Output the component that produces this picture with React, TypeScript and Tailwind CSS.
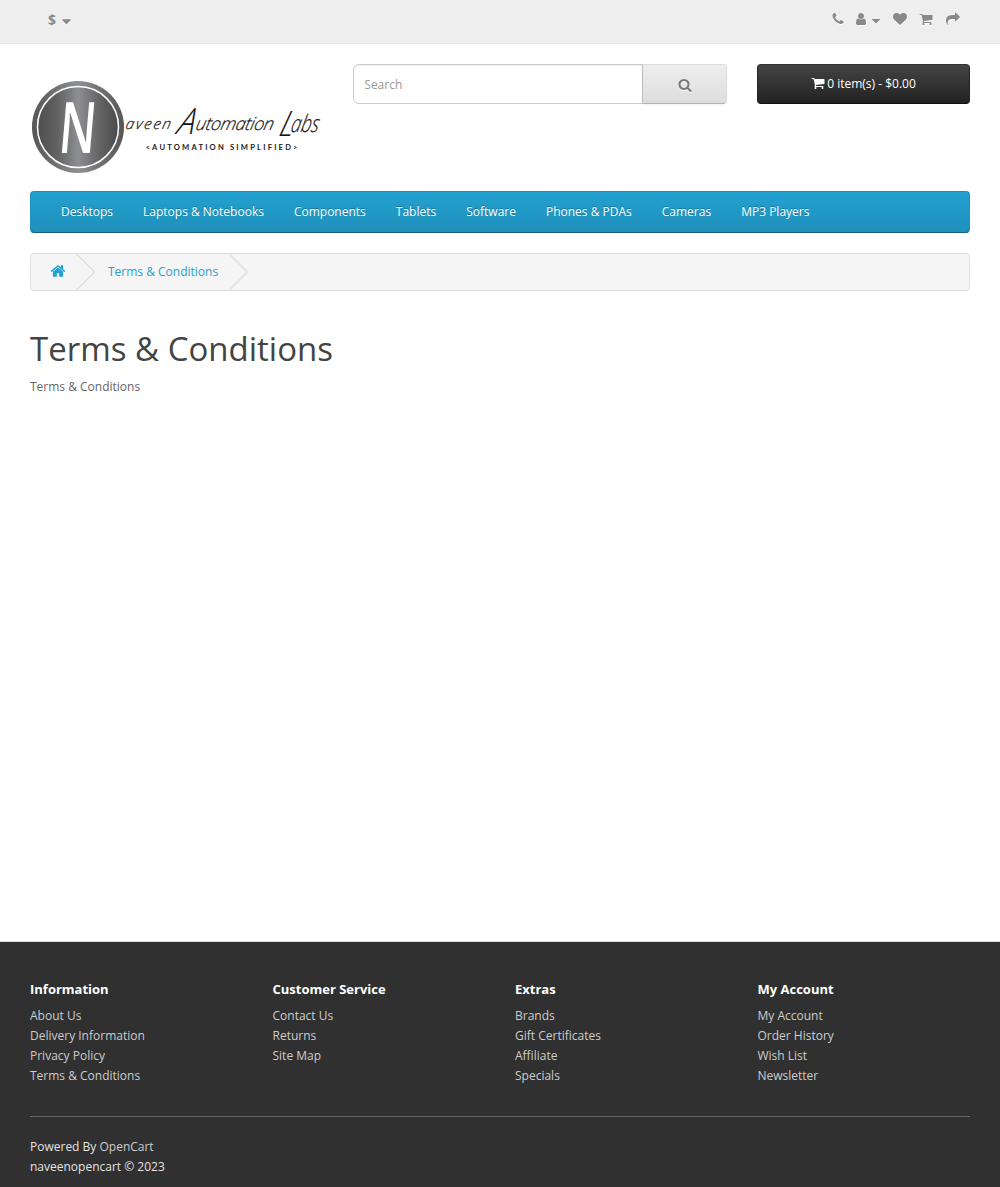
import React from "react";

const paths = {
  phone:
    "M1600 1240q0 27-10 70.5t-21 68.5q-21 50-122 106-94 51-186 51-27 0-52.5-3.5t-57.5-12.5-47.5-14.5-55.5-20.5-49-18q-98-35-175-83-128-79-264.5-215.5t-215.5-264.5q-48-77-83-175-3-9-18-49t-20.5-55.5-14.5-47.5-12.5-57.5-3.5-52.5q0-92 51-186 56-101 106-122 25-11 68.5-21t70.5-10q14 0 21 3 18 6 53 76 11 19 30 54t35 63.5 31 53.5q3 4 17.5 25t21.5 35.5 7 28.5q0 20-28.5 50t-62 55-62 53-28.5 46q0 9 5 22.5t8.5 20.5 14 24 11.5 19q76 137 174 235t235 174q2 1 19 11.5t24 14 20.5 8.5 22.5 5q18 0 46-28.5t53-62 55-62 50-28.5q14 0 28.5 7t35.5 21.5 25 17.5q25 15 53.5 31t63.5 35 54 30q70 35 76 53 3 7 3 21z",
  user: "M1536 1399q0 109-62.5 187t-150.5 78h-854q-88 0-150.5-78t-62.5-187q0-85 8.5-160.5t31.5-152 58.5-131 94-89 134.5-34.5q131 128 313 128t313-128q76 0 134.5 34.5t94 89 58.5 131 31.5 152 8.5 160.5zm-256-887q0 159-112.5 271.5t-271.5 112.5-271.5-112.5-112.5-271.5 112.5-271.5 271.5-112.5 271.5 112.5 112.5 271.5z",
  heart:
    "M896 1664q-26 0-44-18l-624-602q-10-8-27.5-26t-55.5-65.5-68-97.5-53.5-121-23.5-138q0-220 127-344t351-124q62 0 126.5 21.5t120 58 95.5 68.5 76 68q36-36 76-68t95.5-68.5 120-58 126.5-21.5q224 0 351 124t127 344q0 221-229 450l-623 600q-18 18-44 18z",
  cart: "M704 1536q0 52-38 90t-90 38-90-38-38-90 38-90 90-38 90 38 38 90zm896 0q0 52-38 90t-90 38-90-38-38-90 38-90 90-38 90 38 38 90zm128-1088v512q0 24-16.5 42.5t-40.5 21.5l-1044 122q13 60 13 70 0 16-24 64h920q26 0 45 19t19 45-19 45-45 19h-1024q-26 0-45-19t-19-45q0-11 8-31.5t16-36 21.5-40 15.5-29.5l-177-823h-204q-26 0-45-19t-19-45 19-45 45-19h256q16 0 28.5 6.5t19.5 15.5 13 24.5 8 26 5.5 29.5 4.5 26h1201q26 0 45 19t19 45z",
  share:
    "M1792 640q0 26-19 45l-512 512q-19 19-45 19t-45-19-19-45v-256h-224q-98 0-175.5 6t-154 21.5-133 42.5-105.5 69.5-80 101-48.5 138.5-17.5 181q0 55 5 123 0 6 2.5 23.5t2.5 26.5q0 15-8.5 25t-23.5 10q-16 0-28-17-7-9-13-22t-13.5-30-10.5-24q-127-285-127-451 0-199 53-333 162-403 875-403h224v-256q0-26 19-45t45-19 45 19l512 512q19 19 19 45z",
  caret:
    "M1408 704q0 26-19 45l-448 448q-19 19-45 19t-45-19l-448-448q-19-19-19-45t19-45 45-19h896q26 0 45 19t19 45z",
  home: "M1472 992v480q0 26-19 45t-45 19h-384v-384h-256v384h-384q-26 0-45-19t-19-45v-480q0-1 .5-3t.5-3l575-474 575 474q1 2 1 6zm223-69l-62 74q-8 9-21 11h-3q-13 0-21-7l-692-577-692 577q-12 8-24 7-13-2-21-11l-62-74q-8-10-7-23.5t11-21.5l719-599q32-26 76-26t76 26l244 204v-195q0-14 9-23t23-9h192q14 0 23 9t9 23v408l219 182q10 8 11 21.5t-7 23.5z",
  search:
    "M1216 832q0-185-131.5-316.5t-316.5-131.5-316.5 131.5-131.5 316.5 131.5 316.5 316.5 131.5 316.5-131.5 131.5-316.5zm512 832q0 52-38 90t-90 38q-54 0-90-38l-343-342q-179 124-399 124-143 0-273.5-55.5t-225-150-150-225-55.5-273.5 55.5-273.5 150-225 225-150 273.5-55.5 273.5 55.5 225 150 150 225 55.5 273.5q0 220-124 399l343 343q37 37 37 90z",
};

function Icon({ name, className = "size-3.5" }: { name: keyof typeof paths; className?: string }) {
  return (
    <svg viewBox="0 0 1792 1792" fill="currentColor" className={"shrink-0 overflow-visible " + className}>
      <path d={paths[name]} />
    </svg>
  );
}

function Logo() {
  return (
    <svg viewBox="0 0 300 96" className="mt-[15px] h-24 w-[300px] overflow-visible" fontFamily="'Open Sans', sans-serif">
      <defs>
        <linearGradient id="metal" x1="0" x2="1">
          <stop offset="0" stopColor="#4e4e4e" />
          <stop offset="0.25" stopColor="#626263" />
          <stop offset="0.5" stopColor="#8e8f93" />
          <stop offset="0.75" stopColor="#666667" />
          <stop offset="1" stopColor="#4a4a4a" />
        </linearGradient>
        <linearGradient id="rim" x1="0" x2="1">
          <stop offset="0" stopColor="#555" />
          <stop offset="0.5" stopColor="#8e8f92" />
          <stop offset="1" stopColor="#555" />
        </linearGradient>
      </defs>
      <circle cx="48" cy="48" r="46" fill="url(#rim)" />
      <circle cx="48" cy="48" r="40.5" fill="url(#metal)" stroke="#fff" strokeWidth="1.5" />
      <text transform="translate(27.5 73.5) skewX(-5) scale(.66 1)" fontSize="71" fontWeight="600" fill="#fff">N</text>
      <g fill="#111" fontStyle="italic" fontWeight="300" stroke="#111" strokeWidth=".2">
        <text transform="translate(95 50) skewX(-12)" fontSize="15" textLength="45">aveen</text>
        <text transform="translate(146 55) skewX(-16)" fontSize="36" textLength="17" lengthAdjust="spacingAndGlyphs">A</text>
        <text transform="translate(165 51) skewX(-12)" fontSize="18" textLength="78">utomation</text>
        <text transform="translate(248 57) skewX(-16)" fontSize="35" textLength="14" lengthAdjust="spacingAndGlyphs">L</text>
        <text transform="translate(260 53) skewX(-12)" fontSize="24" textLength="28" lengthAdjust="spacingAndGlyphs">abs</text>
      </g>
      <text x="115.5" y="71" fontSize="7.6" fontWeight="700" fill="#222" fontFamily="Lato, sans-serif" textLength="152">
        &lt;AUTOMATION SIMPLIFIED&gt;
      </text>
    </svg>
  );
}

const menu = ["Desktops", "Laptops & Notebooks", "Components", "Tablets", "Software", "Phones & PDAs", "Cameras", "MP3 Players"];

const columns = [
  { title: "Information", links: ["About Us", "Delivery Information", "Privacy Policy", "Terms & Conditions"] },
  { title: "Customer Service", links: ["Contact Us", "Returns", "Site Map"] },
  { title: "Extras", links: ["Brands", "Gift Certificates", "Affiliate", "Specials"] },
  { title: "My Account", links: ["My Account", "Order History", "Wish List", "Newsletter"] },
];

function Chevron({ className }: { className: string }) {
  return (
    <svg viewBox="0 0 20 36" className={"absolute top-0 h-9 w-5 " + className} fill="none" stroke="#ddd" strokeWidth="1.2">
      <path d="M0.5 0L18.5 18L0.5 36" />
    </svg>
  );
}

export default function App() {
  return (
    <div className="flex min-h-[1187px] flex-col bg-white font-['Open_Sans',sans-serif] text-[12px] leading-5 text-[#666]">
      <nav className="flex h-11 justify-between border-b border-[#e2e2e2] bg-[#eee] pr-10 pl-12 text-[#888]">
        <button className="flex h-10 items-center [&_svg]:drop-shadow-[0_1px_0_#fff]">
          <strong className="text-[14px] [text-shadow:0_1px_0_#fff]">$</strong>
          <Icon name="caret" className="mt-0.5 ml-[3px] size-[15px]" />
        </button>
        <div className="flex h-[38px] items-center [&_svg]:drop-shadow-[0_1px_0_#fff]">
          <Icon name="phone" className="mr-px size-3.5" />
          <Icon name="user" className="ml-2 size-3.5" />
          <Icon name="caret" className="mt-[3px] ml-px size-3.5" />
          <Icon name="heart" className="ml-2.5 size-3.5" />
          <Icon name="cart" className="ml-3 size-3.5" />
          <Icon name="share" className="ml-[13px] size-3.5" />
        </div>
      </nav>

      <header className="flex h-[147px] px-[30px] pt-5">
        <div className="w-[323.3px]">
          <Logo />
        </div>
        <div className="flex h-10 w-[374px]">
          <input
            placeholder="Search"
            className="min-w-0 flex-1 rounded-l-[6px] border border-[#ccc] px-2.5 pt-0.5 shadow-[inset_0_1px_1px_rgba(0,0,0,0.075)] outline-none placeholder:text-[#999]"
          />
          <button className="-ml-px flex w-[85px] items-center justify-center rounded-r-[4px] border border-[#ddd] border-b-[#b3b3b3] border-l-[#bbb] bg-linear-to-b from-[#eee] to-[#ddd] pt-0.5 text-[#777] shadow-[0_1px_2px_rgba(0,0,0,0.05)] [&_svg]:drop-shadow-[0_1px_0_#fff]">
            <Icon name="search" />
          </button>
        </div>
        <button className="ml-auto flex h-10 w-[213px] items-center justify-center rounded-[4px] border border-[#222] border-t-[#333] border-b-[#111] bg-linear-to-b from-[#444] to-[#222] text-white">
          <Icon name="cart" className="mr-0.5 mb-0.5 size-3.5" />
          0 item(s) - $0.00
        </button>
      </header>

      <nav className="mx-[30px] flex h-[42px] rounded-[4px] border border-[#1f90bb] border-b-[#145e7a] bg-linear-to-b from-[#23a1d1] to-[#1f90bb] pl-[15px] text-white [text-shadow:0_-1px_0_rgba(0,0,0,0.25)]">
        {menu.map((item) => (
          <a key={item} className="px-[15px] pt-2.5">
            {item}
          </a>
        ))}
      </nav>

      <div className="relative mx-[30px] mt-5 flex h-[38px] items-center rounded-[4px] border border-[#ddd] bg-[#f5f5f5] pl-[19px] text-[#23a1d1]">
        <Icon name="home" className="mb-0.5 size-4" />
        <Chevron className="left-[45px]" />
        <a className="ml-[42px]">Terms &amp; Conditions</a>
        <Chevron className="left-[198px]" />
      </div>

      <main className="flex-1 px-[30px] pt-10">
        <h1 className="text-[33px] leading-9 text-[#444]">Terms &amp; Conditions</h1>
        <p className="mt-2.5">Terms &amp; Conditions</p>
      </main>

      <footer className="h-[246px] border-t border-[#ddd] bg-[#303030] px-[30px] pt-[37px] text-[#e2e2e2]">
        <div className="-mr-[30px] grid h-[137px] grid-cols-4">
          {columns.map((column) => (
            <section key={column.title}>
              <h5 className="text-[13px] font-bold text-white">{column.title}</h5>
              <ul className="mt-[7px] text-[#ccc]">
                {column.links.map((link) => (
                  <li key={link}>{link}</li>
                ))}
              </ul>
            </section>
          ))}
        </div>
        <hr className="border-[#666]" />
        <p className="mt-5">
          Powered By <a className="text-[#ccc]">OpenCart</a>
          <br />
          naveenopencart © 2023
        </p>
      </footer>
    </div>
  );
}
